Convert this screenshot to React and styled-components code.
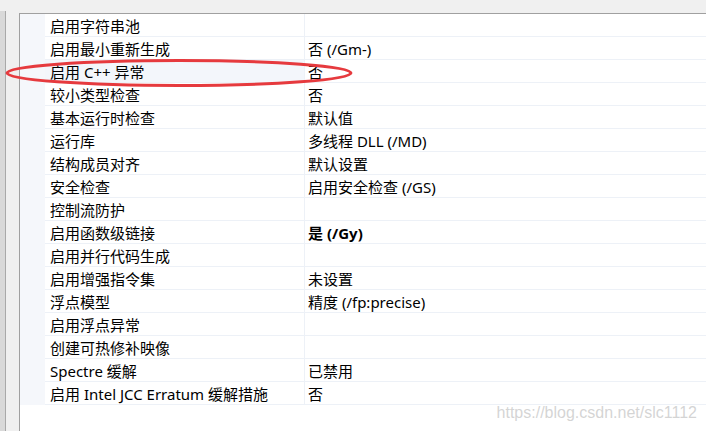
import React from "react";
import styled, { createGlobalStyle } from "styled-components";

const GlobalStyle = createGlobalStyle`
  html, body {
    margin: 0;
    padding: 0;
    background: #f0f0f0;
    overflow: hidden;
  }
`;

const Page = styled.div`
  position: relative;
  display: flex;
  width: 706px;
  height: 431px;
  font-family: "Noto Sans", "Noto Sans CJK SC", sans-serif;
  font-size: 15px;
  color: #000;
`;

const SideStrip = styled.div`
  width: 5px;
  margin-top: 11px;
  background: #d9d9d9;
  border-right: 1px solid #a9a9a9;
`;

const Panel = styled.div`
  flex: 1;
  margin-left: 13px;
  margin-top: 13px;
  background: #fff;
  border-top: 1px solid #a0a0a0;
  border-left: 1px solid #a0a0a0;
`;

const Row = styled.div`
  display: grid;
  grid-template-columns: 25px 260px 1fr;
  height: 23px;
`;

const Gutter = styled.div`
  background: #f5f7fb;
`;

const Cell = styled.div`
  display: flex;
  align-items: center;
  box-sizing: border-box;
  padding-left: ${(p) => (p.$value ? "3px" : "5px")};
  border-bottom: 1px solid #edf1f7;
  border-right: ${(p) => (p.$value ? "none" : "1px solid #edf1f7")};
  background: ${(p) => (p.$highlight ? "#f3f6fb" : "#fff")};
  font-weight: ${(p) => (p.$bold ? 700 : 400)};
  white-space: nowrap;
`;

const Annotation = styled.svg`
  position: absolute;
  left: 0;
  top: 0;
  pointer-events: none;
`;

const Watermark = styled.div`
  position: absolute;
  right: 9px;
  bottom: 9px;
  font-family: "Liberation Sans", Arial, sans-serif;
  font-size: 16px;
  color: rgba(205, 205, 205, 0.85);
  text-shadow: 0 0 1px rgba(255, 255, 255, 0.9);
`;

const rows = [
  { name: "启用字符串池", value: "" },
  { name: "启用最小重新生成", value: "否 (/Gm-)" },
  { name: "启用 C++ 异常", value: "否", highlight: true },
  { name: "较小类型检查", value: "否" },
  { name: "基本运行时检查", value: "默认值" },
  { name: "运行库", value: "多线程 DLL (/MD)" },
  { name: "结构成员对齐", value: "默认设置" },
  { name: "安全检查", value: "启用安全检查 (/GS)" },
  { name: "控制流防护", value: "" },
  { name: "启用函数级链接", value: "是 (/Gy)", bold: true },
  { name: "启用并行代码生成", value: "" },
  { name: "启用增强指令集", value: "未设置" },
  { name: "浮点模型", value: "精度 (/fp:precise)" },
  { name: "启用浮点异常", value: "" },
  { name: "创建可热修补映像", value: "" },
  { name: "Spectre 缓解", value: "已禁用" },
  { name: "启用 Intel JCC Erratum 缓解措施", value: "否" },
];

export default function App() {
  return (
    <>
      <GlobalStyle />
      <Page>
        <SideStrip />
        <Panel>
          {rows.map((r) => (
            <Row key={r.name}>
              <Gutter />
              <Cell $highlight={r.highlight}>{r.name}</Cell>
              <Cell $value $bold={r.bold}>
                {r.value}
              </Cell>
            </Row>
          ))}
        </Panel>
        <Annotation width="706" height="431">
          <ellipse
            cx="179"
            cy="73"
            rx="172"
            ry="12.5"
            fill="none"
            stroke="#e63a3e"
            strokeWidth="3"
          />
        </Annotation>
        <Watermark>https://blog.csdn.net/slc1112</Watermark>
      </Page>
    </>
  );
}
